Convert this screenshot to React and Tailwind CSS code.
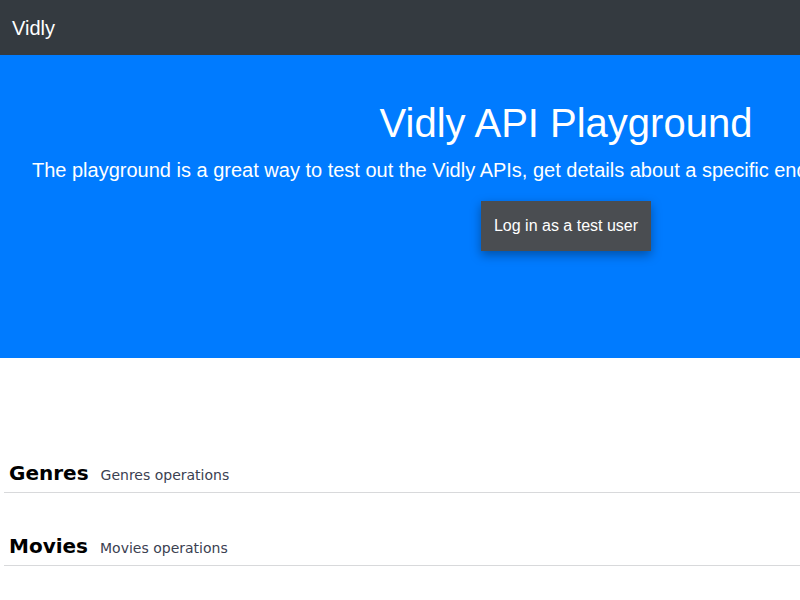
import React from 'react';

const tags = [
  { name: 'Genres', description: 'Genres operations' },
  { name: 'Movies', description: 'Movies operations' },
];

export default function App() {
  return (
    <div className="min-h-screen bg-white overflow-hidden">
      <nav className="h-[55px] bg-[#343a40] flex items-center px-[12px]">
        <span className="text-white text-[20px] font-['Liberation_Sans',Arial,sans-serif]">Vidly</span>
      </nav>

      <div className="h-[303px] bg-[#007bff] text-white font-['Liberation_Sans',Arial,sans-serif]">
        <div className="w-[1132px] pt-[44px] flex flex-col items-center text-center">
          <h1 className="text-[40px] leading-[48px]">Vidly API Playground</h1>
          <p className="mt-[8px] text-[20px] leading-[30px] whitespace-nowrap">
            The playground is a great way to test out the Vidly APIs, get details about a specific endpoint and see it in action at once.
          </p>
          <button className="mt-[16px] h-[50px] px-[13px] bg-[#4a4d51] text-white text-[16px] shadow-[0_4px_10px_rgba(0,0,0,0.35)]">
            Log in as a test user
          </button>
        </div>
      </div>

      <div className="pt-[101px] pl-[4px] font-['DejaVu_Sans',sans-serif]">
        {tags.map((tag, i) => (
          <div key={tag.name} className={i > 0 ? 'mt-[39px]' : ''}>
            <div className="flex items-baseline gap-[12px] pl-[5px] pb-[5px] border-b border-[#d8d9db]">
              <h3 className="text-[20px] leading-[28px] font-bold text-black">{tag.name}</h3>
              <span className="text-[14px] text-[#3b4151]">{tag.description}</span>
            </div>
          </div>
        ))}
      </div>
    </div>
  );
}
